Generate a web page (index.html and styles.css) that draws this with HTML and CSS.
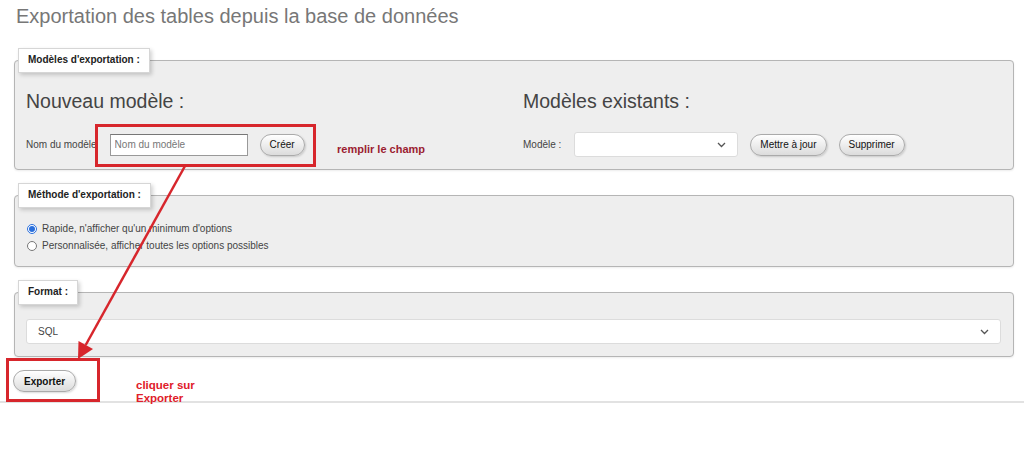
FILE: index.html
```html
<!DOCTYPE html>
<html lang="fr">
<head>
  <meta charset="UTF-8" />
  <title>Exportation</title>
  <link rel="stylesheet" href="styles.css">
</head>
<body>
  <div class="page">
    <h2 class="title">Exportation des tables depuis la base de données</h2>

    <fieldset>
      <legend>Modèles d'exportation :</legend>
      <div class="models">
        <div>
          <h3>Nouveau modèle :</h3>
          <div class="row">
            <label>Nom du modèle</label>
            <input type="text" class="text-input" placeholder="Nom du modèle">
            <button type="button" class="btn">Créer</button>
          </div>
        </div>
        <div>
          <h3>Modèles existants :</h3>
          <div class="row">
            <label>Modèle :</label>
            <div class="select small">
              <span></span>
              <svg width="9" height="6" viewBox="0 0 9 6"><path d="M1 1 L4.5 4.5 L8 1" fill="none" stroke="#555" stroke-width="1.3"/></svg>
            </div>
            <button type="button" class="btn">Mettre à jour</button>
            <button type="button" class="btn">Supprimer</button>
          </div>
        </div>
      </div>
    </fieldset>

    <fieldset>
      <legend>Méthode d'exportation :</legend>
      <div class="options">
        <label class="radio"><input type="radio" name="method" checked> Rapide, n'afficher qu'un minimum d'options</label>
        <label class="radio"><input type="radio" name="method"> Personnalisée, afficher toutes les options possibles</label>
      </div>
    </fieldset>

    <fieldset>
      <legend>Format :</legend>
      <div class="select wide">
        <span>SQL</span>
        <svg width="9" height="6" viewBox="0 0 9 6"><path d="M1 1 L4.5 4.5 L8 1" fill="none" stroke="#555" stroke-width="1.3"/></svg>
      </div>
    </fieldset>

    <button type="button" class="btn bold export">Exporter</button>
  </div>
  <hr class="line">

  <!-- annotations -->
  <div class="mark mark-input"></div>
  <div class="mark mark-export"></div>
  <div class="note note-fill">remplir le champ</div>
  <div class="note note-click">cliquer sur<br>Exporter</div>
  <svg class="arrow" width="1024" height="454" viewBox="0 0 1024 454">
    <line x1="185" y1="166" x2="85.7" y2="345" stroke="#d7262c" stroke-width="2.5"/>
    <polygon points="78,359 93,349 78.5,341" fill="#d7262c"/>
  </svg>
</body>
</html>
```

FILE: styles.css
```css
body {
  margin: 0;
  font-family: "Liberation Sans", Arial, sans-serif;
  background-color: #ffffff;
  color: #333;
  position: relative;
  height: 454px;
  overflow: hidden;
}
.page {
  padding: 0 10px 0 14px;
}
.title {
  margin: 0;
  padding: 4px 0 0 2px;
  font-size: 20px;
  line-height: 24px;
  font-weight: normal;
  color: #777;
}
fieldset {
  margin: 20px 0 13px;
  padding: 0 11px 12px;
  border: 1px solid #b5b5b5;
  border-radius: 4px;
  background-color: #eeeeee;
  box-shadow: 0 1px 2px rgba(0,0,0,0.08);
  min-width: 0;
}
fieldset + fieldset {
  margin-top: 0;
}
legend {
  margin-left: -8px;
  padding: 4px 9px 5px;
  font-size: 10px;
  line-height: 14px;
  font-weight: bold;
  color: #222;
  background-color: #ffffff;
  border: 1px solid #d6d6d6;
  box-shadow: 2px 2px 4px rgba(0,0,0,0.18);
}
.models {
  display: grid;
  grid-template-columns: 497px 1fr;
}
h3 {
  margin: 17px 0 0;
  font-size: 19.5px;
  line-height: 22px;
  font-weight: normal;
  color: #444;
}
.row {
  display: flex;
  align-items: center;
  gap: 12px;
  height: 25px;
  margin-top: 20px;
  font-size: 10px;
  color: #444;
}
.row label {
  margin-right: 1px;
}
.text-input {
  box-sizing: border-box;
  width: 138px;
  height: 22px;
  margin: 0;
  padding: 0 4px;
  border: 1px solid #999;
  border-top-color: #777;
  font-family: inherit;
  font-size: 10px;
  color: #333;
  background: #fff;
}
.text-input::placeholder {
  color: #777;
}
.btn {
  height: 22px;
  margin: 0;
  padding: 0 9px;
  border: 1px solid #aaa;
  border-radius: 11px;
  background: linear-gradient(#ffffff, #dcdcdc);
  box-shadow: 1px 1px 2px rgba(0,0,0,0.15);
  font-family: inherit;
  font-size: 10px;
  color: #111;
}
.btn.bold {
  font-weight: bold;
}
.select {
  box-sizing: border-box;
  display: flex;
  align-items: center;
  justify-content: space-between;
  height: 25px;
  padding: 0 11px;
  background: #fff;
  border: 1px solid #dcdcdc;
  border-radius: 3px;
  font-size: 10px;
  color: #444;
}
.select.small {
  width: 164px;
}
.select.wide {
  margin-top: 14px;
  margin-right: 1px;
}
.options {
  margin-top: 12px;
}
.radio {
  display: flex;
  align-items: center;
  height: 17px;
  font-size: 10px;
  color: #444;
}
.radio input {
  width: 10px;
  height: 10px;
  margin: 0 5px 0 1px;
  accent-color: #2a6fdb;
}
.export {
  margin-left: -1px;
  padding: 0 10px;
}
.line {
  margin: 9px 0 0;
  border: none;
  border-top: 2px solid #e2e2e2;
}
.mark {
  position: absolute;
  box-sizing: border-box;
  border: 3px solid #d7262c;
}
.mark-input {
  left: 95px;
  top: 124px;
  width: 221px;
  height: 43px;
}
.mark-export {
  left: 6px;
  top: 358px;
  width: 94px;
  height: 44px;
}
.note {
  position: absolute;
  font-weight: bold;
}
.note-fill {
  left: 337px;
  top: 142px;
  font-size: 11px;
  line-height: 14px;
  color: #9b1c31;
}
.note-click {
  left: 136px;
  top: 379px;
  font-size: 11.5px;
  line-height: 13px;
  color: #e0202a;
}
.arrow {
  position: absolute;
  left: 0;
  top: 0;
  pointer-events: none;
}
```
